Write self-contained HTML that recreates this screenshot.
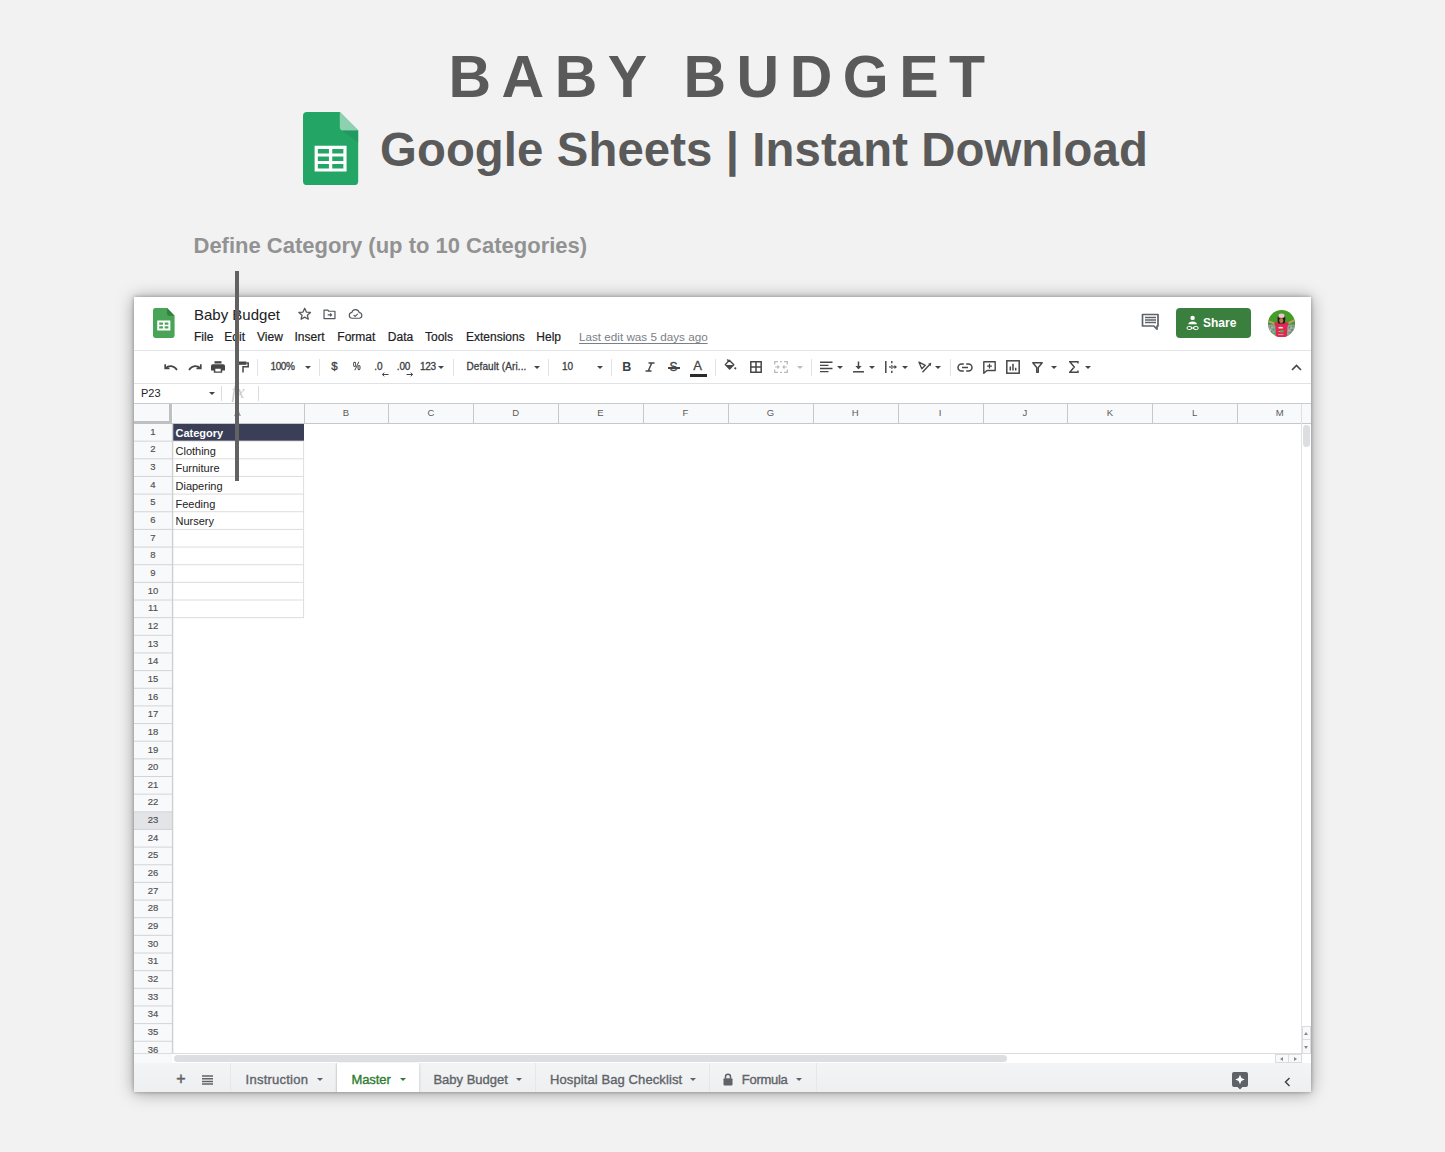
<!DOCTYPE html>
<html><head><meta charset="utf-8"><title>Baby Budget</title>
<style>
*{box-sizing:border-box}
html,body{margin:0;padding:0}
body{width:1445px;height:1152px;background:#f2f2f2;position:relative;overflow:hidden;font-family:"Liberation Sans",Arial,sans-serif;color:#222}
.abs{position:absolute}
.t{position:absolute;white-space:nowrap;line-height:1}
#title{left:448.5px;top:47.5px;font-weight:bold;font-size:59px;letter-spacing:10.5px;color:#5a5a5a}
#sub{left:380px;top:126px;font-weight:bold;font-size:47.3px;letter-spacing:.1px;color:#5a5a5a}
#cap{left:193.5px;top:235px;font-weight:bold;font-size:22px;color:#929292}
#win{left:134px;top:297px;width:1177px;height:795px;background:#fff;box-shadow:0 1px 16px rgba(0,0,0,.36),0 0 4px rgba(0,0,0,.3);overflow:hidden}
#vline{left:235.3px;top:271px;width:3.3px;height:210px;background:#626262}
.menu{font-size:12px;color:#202124;top:34px;-webkit-text-stroke:.2px #202124}
.hl{position:absolute;left:0;width:1177px;height:1px}
.tb{font-size:10px;color:#3c4043;top:65px;-webkit-text-stroke:.3px #3c4043}
.sep{position:absolute;top:62px;width:1px;height:17px;background:#e1e3e6}
.arr{position:absolute;width:0;height:0;border-left:3.5px solid transparent;border-right:3.5px solid transparent;border-top:3.5px solid #444;top:69px}
.rh{position:absolute;left:0;width:38px;height:17.65px;font-size:9.5px;color:#505050;text-align:center;line-height:17.65px;-webkit-text-stroke:.15px #505050}
.ch{position:absolute;top:107px;height:20px;font-size:9.5px;color:#5a5a5a;text-align:center;line-height:18px;background:#f8f9fa;border-right:1px solid #c8c8c8}
.cell{position:absolute;left:38.5px;width:131.5px;font-size:11px;color:#222;padding-left:3px;white-space:nowrap}
.tab{position:absolute;top:766px;height:29px;font-size:13px;color:#5f6368;line-height:1}
.tab span{position:absolute;top:9.5px;white-space:nowrap;-webkit-text-stroke:.35px currentColor}
.ta{position:absolute;width:0;height:0;border-left:3.5px solid transparent;border-right:3.5px solid transparent;border-top:3.5px solid #5f6368;top:781px}
</style></head><body>

<div class="t" id="title">BABY BUDGET</div>
<svg class="abs" style="left:303.4px;top:111.5px" width="55.2" height="73.2" viewBox="0 0 57 75" preserveAspectRatio="none">
<path d="M4 0h34l19 19v52a4 4 0 0 1-4 4H4a4 4 0 0 1-4-4V4a4 4 0 0 1 4-4z" fill="#23a566"/>
<path d="M38 0l19 19H42a4 4 0 0 1-4-4z" fill="#8ed1b1"/>
<path d="M40 19h17v12z" fill="#1c8f58" opacity=".45"/>
<path d="M12 34.5h33v26.5H12zM15.3 37.8v4.6h11.5v-4.6zM30.2 37.8v4.6h11.5v-4.6zM15.3 45.5v4.6h11.5v-4.6zM30.2 45.5v4.6h11.5v-4.6zM15.3 53.2v4.6h11.5v-4.6zM30.2 53.2v4.6h11.5v-4.6z" fill="#fff" fill-rule="evenodd"/>
</svg>
<div class="t" id="sub">Google Sheets | Instant Download</div>
<div class="t" id="cap">Define Category (up to 10 Categories)</div>
<div class="abs" id="win">
<svg class="abs" style="left:19.4px;top:11.4px" width="21.6" height="30" viewBox="0 0 23 31" preserveAspectRatio="none">
<path d="M2.5 0H15l8 8v20.5a2.5 2.5 0 0 1-2.5 2.5h-18A2.5 2.5 0 0 1 0 28.500v-26A2.500 2.500 0 0 1 2.5 0z" fill="#4aa457"/>
<path d="M15 0l8 8h-6a2 2 0 0 1-2-2z" fill="#33803f"/>
<path d="M4.5 12.800h14v10.400h-14zM6.600 14.900v2.300h4v-2.300zM12.400 14.900v2.300h4v-2.300zM6.600 18.900v2.300h4v-2.300zM12.400 18.900v2.300h4v-2.300z" fill="#fff" fill-rule="evenodd"/>
</svg>
<div class="t" style="left:60px;top:10px;font-size:15px;color:#202124">Baby Budget</div>
<svg class="abs" style="left:162.8px;top:8.8px" width="15.4" height="15.4" viewBox="0 0 24 24"><path d="M12 3.500l2.600 6 6.400.6-4.900 4.200 1.500 6.300L12 17.300l-5.600 3.300 1.500-6.300L3 10.100l6.400-.6z" fill="none" stroke="#54585c" stroke-width="2" stroke-linejoin="round"/></svg>
<svg class="abs" style="left:187.8px;top:9.7px" width="15" height="14.6" viewBox="0 0 24 24"><path d="M3 5h6l2 2h10v12H3z" fill="none" stroke="#54585c" stroke-width="2" stroke-linejoin="round"/><path d="M9 13h6M13 10.500l2.500 2.500-2.500 2.500" fill="none" stroke="#54585c" stroke-width="1.800"/></svg>
<svg class="abs" style="left:213.7px;top:10.4px" width="15.4" height="14.2" viewBox="0 0 26 24"><path d="M7 19a5 5 0 0 1-.5-9.950A6.500 6.500 0 0 1 19 9.500a4.800 4.800 0 0 1 .5 9.500z" fill="none" stroke="#54585c" stroke-width="2"/><path d="M9.500 13.500l2.500 2.500 4.500-4.500" fill="none" stroke="#54585c" stroke-width="1.800"/></svg>
<div class="t menu" style="left:60px">File</div>
<div class="t menu" style="left:90.30000000000001px">Edit</div>
<div class="t menu" style="left:123px">View</div>
<div class="t menu" style="left:160.5px">Insert</div>
<div class="t menu" style="left:203.3px">Format</div>
<div class="t menu" style="left:253.8px">Data</div>
<div class="t menu" style="left:291px">Tools</div>
<div class="t menu" style="left:332px">Extensions</div>
<div class="t menu" style="left:402.29999999999995px">Help</div>
<div class="t menu" style="left:445px;color:#7b8086;-webkit-text-stroke:0;text-decoration:underline;text-decoration-thickness:1px;text-underline-offset:1.5px;font-size:11.7px">Last edit was 5 days ago</div>
<svg class="abs" style="left:1007px;top:16px" width="19" height="18" viewBox="0 0 19 18"><path d="M1.500 1.500h15.500v11.500h-1v3.200l-3.200-3.200H1.500z" fill="none" stroke="#5f6368" stroke-width="1.700" stroke-linejoin="round"/><path d="M4 4.500h11M4 7h11M4 9.500h11" stroke="#5f6368" stroke-width="1.300"/></svg>
<div class="abs" style="left:1042px;top:11px;width:75px;height:30px;border-radius:4px;background:#3b7f3f"></div>
<svg class="abs" style="left:1051px;top:18px" width="15" height="16" viewBox="0 0 15 16"><circle cx="7.6" cy="2.9" r="2.2" fill="#fff"/><path d="M3.2 9.300c0-1.900 2-2.900 4.400-2.900s4.400 1 4.400 2.900z" fill="#fff"/><rect x="2" y="11.500" width="4.800" height="3" rx="1.500" fill="none" stroke="#fff" stroke-width="1"/><rect x="8.400" y="11.500" width="4.800" height="3" rx="1.500" fill="none" stroke="#fff" stroke-width="1"/><path d="M5.500 13h4.200" stroke="#fff" stroke-width="1"/></svg>
<div class="t" style="left:1069px;top:20px;font-size:12px;font-weight:bold;color:#fff">Share</div>
<svg class="abs" style="left:1133.9px;top:12.6px" width="27.2" height="27.4" viewBox="0 0 27.2 27.4"><defs><clipPath id="av"><circle cx="13.6" cy="13.7" r="13.6"/></clipPath><filter id="bl" x="-10%" y="-10%" width="120%" height="120%"><feGaussianBlur stdDeviation="0.45"/></filter></defs><g clip-path="url(#av)"><rect width="28" height="28" fill="#449d27"/><g filter="url(#bl)"><path d="M0 15.200C3 13.800 5.500 14.500 7.500 15.500V28H0zM19 15.500c2.500-1.200 5.500-1.500 8.500-.3V28H19z" fill="#a79fbb" opacity=".8"/><g fill="#4f9c33"><circle cx="2.500" cy="17" r=".8"/><circle cx="5.500" cy="19.500" r=".9"/><circle cx="3.500" cy="22" r=".8"/><circle cx="6.500" cy="23.500" r=".7"/><circle cx="21.500" cy="17.500" r=".8"/><circle cx="24" cy="20" r=".9"/><circle cx="22" cy="22.500" r=".8"/><circle cx="25" cy="16.500" r=".7"/></g><g fill="#c9c2d8"><circle cx="4" cy="17.500" r=".7"/><circle cx="2.500" cy="20" r=".7"/><circle cx="23" cy="18" r=".7"/><circle cx="21" cy="20.500" r=".7"/><circle cx="24.500" cy="22" r=".6"/></g><path d="M0.200 10.600C3 11 5.200 12 7.200 13.300L6.300 15C4.500 13.500 2.500 12.600 0 12.200zM26.800 9.300c-2.600.8-4.800 2-6.800 3.500l.9 1.700c1.800-1.600 3.800-2.800 6.300-3.600z" fill="#c89a72"/><path d="M6.200 13.200c1.500-.9 3.200-1.200 4.600-1.200h5.600c1.500 0 3 .3 4.300 1.200l-1.300 3.600-.7 10.700H8.200L7.700 16.800z" fill="#e2264e"/><path d="M9.600 8.200c0-2.200 1.700-3.600 3.800-3.600s3.900 1.400 3.900 3.600c0 1.800-.3 4.300-.9 5.300h-6c-.6-1-.8-3.500-.8-5.300z" fill="#1f1712"/><ellipse cx="13.300" cy="10.600" rx="2.100" ry="2.600" fill="#b5794f"/><path d="M9.300 8.300c1.400-.7 6.600-.7 8.300 0l-.3-1c-1.500-.8-6.200-.8-7.700 0z" fill="#4a3a3a"/><ellipse cx="13.500" cy="5.800" rx="3.100" ry="2.200" fill="#ecc3cf"/><ellipse cx="12.700" cy="17.700" rx="2.500" ry="0.900" fill="#cfeef0"/><rect x="12.400" y="20" width="3.300" height="2.600" fill="#5aa34a"/><path d="M10.500 21.500h2M10 24.600h5.500" stroke="#c9b7d6" stroke-width="0.800"/></g></g></svg>
<div class="hl" style="top:53px;background:#e3e5e8"></div>
<div class="hl" style="top:86px;background:#dfe3e8"></div>
<div class="hl" style="top:106px;background:#c9ccd0"></div>
<svg class="abs" style="left:30.0px;top:65.0px" width="14" height="10" viewBox="0 0 14 10"><path d="M1.200 2.200v4.300h4.300M1.600 6.300C4.500 3.200 9.800 3 13 8" fill="none" stroke="#444746" stroke-width="1.700"/></svg>
<svg class="abs" style="left:53.5px;top:65.0px" width="14" height="10" viewBox="0 0 14 10"><path d="M12.800 2.200v4.300H8.500M12.400 6.300C9.500 3.200 4.200 3 1 8" fill="none" stroke="#444746" stroke-width="1.700"/></svg>
<svg class="abs" style="left:77.0px;top:64.0px" width="14" height="12" viewBox="0 0 14 12"><rect x="3.500" y="0.200" width="7" height="2.300" fill="#444746"/><path d="M1.800 3.300h10.400a1.800 1.800 0 0 1 1.800 1.800v4.400h-2.800v2.300H2.800V9.500H0V5.100a1.800 1.800 0 0 1 1.800-1.800zM4.300 7.800v2.600h5.400V7.800z" fill="#444746" fill-rule="evenodd"/></svg>
<svg class="abs" style="left:103.5px;top:64.0px" width="11" height="12" viewBox="0 0 11 12"><path d="M0.500 0.500h8v3.300h-8z" fill="#444746"/><path d="M8.500 2h1.700v3.700H5v5.800" fill="none" stroke="#444746" stroke-width="1.500"/></svg>
<div class="sep" style="left:123px"></div>
<div class="t tb" style="left:136.5px;letter-spacing:-.4px">100%</div>
<div class="arr" style="left:171.1px;top:68.5px"></div>
<div class="sep" style="left:185px"></div>
<div class="t tb" style="left:197.2px;font-size:11.500px;top:63.500px">$</div>
<div class="t tb" style="left:219.3px;font-size:10.5px;top:64px;transform:scaleX(.82);transform-origin:0 0">%</div>
<div class="t tb" style="left:240.3px;">.0</div>
<div class="t tb" style="left:262.8px;letter-spacing:-.2px">.00</div>
<svg class="abs" style="left:247.0px;top:74.5px" width="8" height="5" viewBox="0 0 8 5"><path d="M7.500 2.500H1.500M3.300 0.700L1.300 2.500l2 1.800" fill="none" stroke="#444746" stroke-width="1"/></svg>
<svg class="abs" style="left:271.5px;top:74.5px" width="8" height="5" viewBox="0 0 8 5"><path d="M0.500 2.500H6.500M4.700 0.700l2 1.800-2 1.800" fill="none" stroke="#444746" stroke-width="1"/></svg>
<div class="t tb" style="left:286.0px;letter-spacing:-.3px">123</div>
<div class="arr" style="left:304.2px;top:68.5px"></div>
<div class="sep" style="left:319px"></div>
<div class="t tb" style="left:332.5px;letter-spacing:.11px">Default (Ari...</div>
<div class="arr" style="left:399.8px;top:68.5px"></div>
<div class="sep" style="left:414px"></div>
<div class="t tb" style="left:428.0px;">10</div>
<div class="arr" style="left:463.2px;top:68.5px"></div>
<div class="sep" style="left:477px"></div>
<div class="t tb" style="left:488.3px;font-weight:bold;font-size:12.5px;top:63.5px;-webkit-text-stroke:0">B</div>
<svg class="abs" style="left:511.0px;top:65.0px" width="10" height="10" viewBox="0 0 10 10"><path d="M3.500 1h6M0.500 9h6M6.700 1L3.300 9" fill="none" stroke="#444746" stroke-width="1.500"/></svg>
<div class="t tb" style="left:535.5px;top:63.500px;font-size:12px;color:#444746">S</div>
<div class="abs" style="left:533.5px;top:70.3px;width:12px;height:1.300px;background:#444746"></div>
<div class="t tb" style="left:559.2px;top:62px;font-size:13px;color:#444746">A</div>
<div class="abs" style="left:555.5px;top:77px;width:17.500px;height:2.500px;background:#2b2b2b"></div>
<div class="sep" style="left:580.5px"></div>
<svg class="abs" style="left:590.0px;top:62.0px" width="13" height="12" viewBox="0 0 13 12"><path d="M5.300 1.200L9.800 5.700 5.600 9.900 1.300 5.600z" fill="none" stroke="#444746" stroke-width="1.400" stroke-linejoin="round"/><path d="M2 6h7.300L5.600 9.500z" fill="#444746"/><path d="M3.200 0.500L5.500 2.800" stroke="#444746" stroke-width="1.300"/><circle cx="11.300" cy="9.300" r="1.100" fill="#444746"/></svg>
<svg class="abs" style="left:616.0px;top:64.3px" width="12" height="12" viewBox="0 0 12 12"><path d="M0.800 0.800h10.400v10.400H0.800zM6 0.800v10.400M0.800 6h10.400" fill="none" stroke="#444746" stroke-width="1.500"/></svg>
<svg class="abs" style="left:640.0px;top:64.0px" width="14" height="12" viewBox="0 0 14 12"><path d="M0.700 3.500V0.700H4M6 0.700h2M10 0.700h3.300v2.800M0.700 8.500v2.800H4M6 11.300h2M10 11.300h3.300V8.500" fill="none" stroke="#b9bcbb" stroke-width="1.300"/><path d="M1 6h4M3.500 4.500L5 6 3.500 7.500M13 6H9M10.500 4.500L9 6l1.500 1.500" fill="none" stroke="#b9bcbb" stroke-width="1.100"/></svg>
<div class="arr" style="left:662.5px;top:68.5px;border-top-color:#b9bcbb"></div>
<div class="sep" style="left:677px"></div>
<svg class="abs" style="left:685.5px;top:64.0px" width="13" height="12" viewBox="0 0 13 12"><path d="M0 1.300h12.500M0 4.400h8.500M0 7.500h12.500M0 10.600h8.500" stroke="#444746" stroke-width="1.400"/></svg>
<div class="arr" style="left:702.5px;top:68.5px"></div>
<svg class="abs" style="left:719.0px;top:64.0px" width="11" height="12" viewBox="0 0 11 12"><path d="M0 10.800h11" stroke="#444746" stroke-width="1.500"/><path d="M5.500 0.500v7" stroke="#444746" stroke-width="1.500"/><path d="M2.300 5l3.200 3.300L8.700 5z" fill="#444746"/></svg>
<div class="arr" style="left:735.3px;top:68.5px"></div>
<svg class="abs" style="left:750.5px;top:64.0px" width="13" height="12" viewBox="0 0 13 12"><path d="M0.800 0v12" stroke="#444746" stroke-width="1.500"/><path d="M6.800 0v2.300M6.800 4.300v1M6.800 9.700v2.300M6.800 7v.700" stroke="#444746" stroke-width="1.400"/><path d="M4 6h7" stroke="#444746" stroke-width="1.200"/><path d="M9.500 4l2.500 2-2.500 2z" fill="#444746"/></svg>
<div class="arr" style="left:767.9px;top:68.5px"></div>
<svg class="abs" style="left:784.0px;top:64.0px" width="14" height="12" viewBox="0 0 14 12"><path d="M1 1.200l6.300 3.100-3.500 3.400z" fill="none" stroke="#444746" stroke-width="1.300" stroke-linejoin="round"/><path d="M4.500 11.300L12 3.200" stroke="#444746" stroke-width="1.400"/><path d="M13.300 1.800l-.6 3.400-2.600-2.400z" fill="#444746"/></svg>
<div class="arr" style="left:800.9px;top:68.5px"></div>
<div class="sep" style="left:816px"></div>
<svg class="abs" style="left:823.0px;top:65.5px" width="16" height="9" viewBox="0 0 16 9"><path d="M6.800 1H4.500a3.500 3.500 0 0 0 0 7h2.300M9.200 1h2.300a3.500 3.500 0 0 1 0 7H9.200M5 4.500h6" fill="none" stroke="#444746" stroke-width="1.500"/></svg>
<svg class="abs" style="left:848.5px;top:63.5px" width="13" height="13" viewBox="0 0 13 13"><path d="M0.800 0.800h11.400v8.700H4L0.800 12.300z" fill="none" stroke="#444746" stroke-width="1.400" stroke-linejoin="round"/><path d="M6.500 2.800v4.700M4.100 5.200h4.800" stroke="#444746" stroke-width="1.300"/></svg>
<svg class="abs" style="left:871.5px;top:63.3px" width="14" height="14" viewBox="0 0 14 14"><rect x="0.800" y="0.800" width="12.400" height="12.400" fill="none" stroke="#444746" stroke-width="1.500"/><path d="M4.300 10.500V6.500M7 10.500V3.800M9.700 10.500V7.800" stroke="#444746" stroke-width="1.500"/></svg>
<svg class="abs" style="left:897.5px;top:64.5px" width="11" height="11" viewBox="0 0 11 11"><path d="M0.800 0.800h9.400L6.300 5.500v4.700H4.700V5.500z" fill="none" stroke="#444746" stroke-width="1.400" stroke-linejoin="round"/></svg>
<div class="arr" style="left:917.3px;top:68.5px"></div>
<svg class="abs" style="left:934.5px;top:64.0px" width="10" height="12" viewBox="0 0 10 12"><path d="M9 2.500V0.800H0.800L5.300 6 0.800 11.200H9V9.500" fill="none" stroke="#444746" stroke-width="1.400" stroke-linejoin="miter"/></svg>
<div class="arr" style="left:950.5px;top:68.5px"></div>
<svg class="abs" style="left:1156.5px;top:66.5px" width="11" height="7" viewBox="0 0 11 7"><path d="M1 6l4.500-4.500L10 6" fill="none" stroke="#444746" stroke-width="1.600"/></svg>
<div class="t" style="left:7px;top:91px;font-size:11px;color:#222">P23</div>
<div class="arr" style="left:74.5px;top:94.5px"></div>
<div class="abs" style="left:87px;top:89px;width:1px;height:15px;background:#dadce0"></div>
<div class="t" style="left:97.5px;top:85.5px;font-size:18px;font-style:italic;font-family:'Liberation Serif',serif;color:#cacaca">fx</div>
<div class="abs" style="left:124px;top:89px;width:1px;height:15px;background:#dadce0"></div>
<div class="abs" style="left:0;top:107px;width:38.3px;height:20px;background:#f8f9fa;border-right:3px solid #bfc0c2;border-bottom:3.5px solid #bfc0c2"></div>
<div class="ch" style="left:38.5px;width:132.0px;overflow:hidden"><div style="position:relative;left:-1px;width:132.0px">A</div></div>
<div class="ch" style="left:170.5px;width:84.9px;overflow:hidden"><div style="position:relative;left:-1px;width:84.9px">B</div></div>
<div class="ch" style="left:255.4px;width:84.9px;overflow:hidden"><div style="position:relative;left:-1px;width:84.9px">C</div></div>
<div class="ch" style="left:340.3px;width:84.9px;overflow:hidden"><div style="position:relative;left:-1px;width:84.9px">D</div></div>
<div class="ch" style="left:425.1px;width:84.9px;overflow:hidden"><div style="position:relative;left:-1px;width:84.9px">E</div></div>
<div class="ch" style="left:510.0px;width:84.9px;overflow:hidden"><div style="position:relative;left:-1px;width:84.9px">F</div></div>
<div class="ch" style="left:594.9px;width:84.9px;overflow:hidden"><div style="position:relative;left:-1px;width:84.9px">G</div></div>
<div class="ch" style="left:679.8px;width:84.9px;overflow:hidden"><div style="position:relative;left:-1px;width:84.9px">H</div></div>
<div class="ch" style="left:764.7px;width:84.9px;overflow:hidden"><div style="position:relative;left:-1px;width:84.9px">I</div></div>
<div class="ch" style="left:849.5px;width:84.9px;overflow:hidden"><div style="position:relative;left:-1px;width:84.9px">J</div></div>
<div class="ch" style="left:934.4px;width:84.9px;overflow:hidden"><div style="position:relative;left:-1px;width:84.9px">K</div></div>
<div class="ch" style="left:1019.3px;width:84.9px;overflow:hidden"><div style="position:relative;left:-1px;width:84.9px">L</div></div>
<div class="ch" style="left:1104.2px;width:63.8px;overflow:hidden;border-right-color:#e0e0e0"><div style="position:relative;left:-1px;width:84.9px">M</div></div>
<div class="abs" style="left:38px;top:126px;width:1139px;height:1px;background:#c6c7c9"></div>
<div class="abs" style="left:1168px;top:107px;width:9px;height:19px;background:#f8f9fa"></div>
<div class="abs" style="left:0;top:127.0px;width:38.3px;height:630.0px;background:#f8f9fa"></div>
<div class="abs" style="left:0;top:515.30px;width:38.3px;height:17.65px;background:#e2e4e7"></div>
<div class="rh" style="top:125.80px">1</div>
<div class="rh" style="top:143.45px">2</div>
<div class="rh" style="top:161.10px">3</div>
<div class="rh" style="top:178.75px">4</div>
<div class="rh" style="top:196.40px">5</div>
<div class="rh" style="top:214.05px">6</div>
<div class="rh" style="top:231.70px">7</div>
<div class="rh" style="top:249.35px">8</div>
<div class="rh" style="top:267.00px">9</div>
<div class="rh" style="top:284.65px">10</div>
<div class="rh" style="top:302.30px">11</div>
<div class="rh" style="top:319.95px">12</div>
<div class="rh" style="top:337.60px">13</div>
<div class="rh" style="top:355.25px">14</div>
<div class="rh" style="top:372.90px">15</div>
<div class="rh" style="top:390.55px">16</div>
<div class="rh" style="top:408.20px">17</div>
<div class="rh" style="top:425.85px">18</div>
<div class="rh" style="top:443.50px">19</div>
<div class="rh" style="top:461.15px">20</div>
<div class="rh" style="top:478.80px">21</div>
<div class="rh" style="top:496.45px">22</div>
<div class="rh" style="top:514.10px">23</div>
<div class="rh" style="top:531.75px">24</div>
<div class="rh" style="top:549.40px">25</div>
<div class="rh" style="top:567.05px">26</div>
<div class="rh" style="top:584.70px">27</div>
<div class="rh" style="top:602.35px">28</div>
<div class="rh" style="top:620.00px">29</div>
<div class="rh" style="top:637.65px">30</div>
<div class="rh" style="top:655.30px">31</div>
<div class="rh" style="top:672.95px">32</div>
<div class="rh" style="top:690.60px">33</div>
<div class="rh" style="top:708.25px">34</div>
<div class="rh" style="top:725.90px">35</div>
<div class="rh" style="top:743.55px">36</div>
<div class="abs" style="left:38.6px;top:127px;width:131.4px;height:17.45px;background:#3a3e57"></div>
<div class="cell" style="top:127.00px;height:17.65px;line-height:19.05px;color:#fff;font-weight:bold">Category</div>
<div class="cell" style="top:144.65px;height:17.65px;line-height:19.05px">Clothing</div>
<div class="cell" style="top:162.30px;height:17.65px;line-height:19.05px">Furniture</div>
<div class="cell" style="top:179.95px;height:17.65px;line-height:19.05px">Diapering</div>
<div class="cell" style="top:197.60px;height:17.65px;line-height:19.05px">Feeding</div>
<div class="cell" style="top:215.25px;height:17.65px;line-height:19.05px">Nursery</div>
<svg class="abs" style="left:0;top:0" width="1177" height="760" viewBox="0 0 1177 760"><path d="M0 144.15H38.3M0 161.80H38.3M0 179.45H38.3M0 197.10H38.3M0 214.75H38.3M0 232.40H38.3M0 250.05H38.3M0 267.70H38.3M0 285.35H38.3M0 303.00H38.3M0 320.65H38.3M0 338.30H38.3M0 355.95H38.3M0 373.60H38.3M0 391.25H38.3M0 408.90H38.3M0 426.55H38.3M0 444.20H38.3M0 461.85H38.3M0 479.50H38.3M0 497.15H38.3M0 514.80H38.3M0 532.45H38.3M0 550.10H38.3M0 567.75H38.3M0 585.40H38.3M0 603.05H38.3M0 620.70H38.3M0 638.35H38.3M0 656.00H38.3M0 673.65H38.3M0 691.30H38.3M0 708.95H38.3M0 726.60H38.3M0 744.25H38.3" stroke="#d3d4d6" stroke-width="1" fill="none"/><path d="M38.8 144.15H170M38.8 161.80H170M38.8 179.45H170M38.8 197.10H170M38.8 214.75H170M38.8 232.40H170M38.8 250.05H170M38.8 267.70H170M38.8 285.35H170M38.8 303.00H170M38.8 320.65H170M169.6 144.65V321.15" stroke="#dddddd" stroke-width="1" fill="none"/><path d="M38.6 126.50V757" stroke="#cfd0d2" stroke-width="1.4" fill="none"/></svg>
<div class="abs" style="left:1167px;top:126px;width:1px;height:631px;background:#e3e3e3"></div>
<div class="abs" style="left:1169px;top:128px;width:7px;height:22px;border-radius:4px;background:#dcdee1"></div>
<div class="abs" style="left:1168px;top:729px;width:9px;height:14px;border:1px solid #dcdcdc;background:#f8f9fa"></div>
<div class="abs" style="left:1168px;top:742px;width:9px;height:15px;border:1px solid #dcdcdc;background:#f8f9fa"></div>
<div class="abs" style="left:1170px;top:734.500px;border-left:2.500px solid transparent;border-right:2.500px solid transparent;border-bottom:3px solid #888;width:0;height:0"></div>
<div class="abs" style="left:1170px;top:748.500px;border-left:2.500px solid transparent;border-right:2.500px solid transparent;border-top:3px solid #888;width:0;height:0"></div>
<div class="abs" style="left:0;top:756px;width:1177px;height:1px;background:#dcdcdc"></div>
<div class="abs" style="left:0;top:757px;width:1177px;height:9px;background:#fff"></div>
<div class="abs" style="left:0;top:757px;width:38px;height:9px;background:#f8f9fa"></div>
<div class="abs" style="left:40px;top:758px;width:833px;height:7px;border-radius:4px;background:#dcdee1"></div>
<div class="abs" style="left:1141px;top:757px;width:14px;height:9px;border:1px solid #dcdcdc;background:#f8f9fa"></div>
<div class="abs" style="left:1154px;top:757px;width:14px;height:9px;border:1px solid #dcdcdc;background:#f8f9fa"></div>
<div class="abs" style="left:1146px;top:759.500px;border-top:2.500px solid transparent;border-bottom:2.500px solid transparent;border-right:3px solid #888;width:0;height:0"></div>
<div class="abs" style="left:1160px;top:759.500px;border-top:2.500px solid transparent;border-bottom:2.500px solid transparent;border-left:3px solid #888;width:0;height:0"></div>
<div class="abs" style="left:0;top:766px;width:1177px;height:29px;background:linear-gradient(#f3f4f5,#eeeff1)"></div>
<div class="t" style="left:42.3px;top:774.3px;font-size:16px;color:#5f6368;-webkit-text-stroke:.5px #5f6368">+</div>
<svg class="abs" style="left:68.0px;top:778.0px" width="11" height="10" viewBox="0 0 11 10"><path d="M0 1h11M0 3.700h11M0 6.400h11M0 9.100h11" stroke="#5f6368" stroke-width="1.500"/></svg>
<div class="tab" style="left:96.6px;width:106.1px;border-right:1px solid #e6e7e9"><span style="left:15.0px;color:#5f6368;letter-spacing:0.23px">Instruction</span></div>
<div class="ta" style="left:182.8px;border-top-color:#5f6368"></div>
<div class="tab" style="left:202.7px;width:82.6px;background:#fff;box-shadow:0 1px 3px rgba(0,0,0,.2)"><span style="left:14.8px;color:#2e7d32;letter-spacing:-0.1px">Master</span></div>
<div class="ta" style="left:265.6px;border-top-color:#2e7d32"></div>
<div class="tab" style="left:285.3px;width:117.2px;border-right:1px solid #e6e7e9"><span style="left:14.1px;color:#5f6368;letter-spacing:0px">Baby Budget</span></div>
<div class="ta" style="left:381.5px;border-top-color:#5f6368"></div>
<div class="tab" style="left:402.5px;width:173.9px;border-right:1px solid #e6e7e9"><span style="left:13.5px;color:#5f6368;letter-spacing:0.1px">Hospital Bag Checklist</span></div>
<div class="ta" style="left:555.5px;border-top-color:#5f6368"></div>
<div class="tab" style="left:576.4px;width:106.2px;border-right:1px solid #e6e7e9"><span style="left:31.4px;color:#5f6368;letter-spacing:-0.28px">Formula</span></div>
<div class="ta" style="left:662.1px;border-top-color:#5f6368"></div>
<div class="abs" style="left:96px;top:766px;width:1px;height:29px;background:#e6e7e9"></div>
<svg class="abs" style="left:589.0px;top:776.0px" width="10" height="13" viewBox="0 0 10 13"><path d="M2.500 5.500V3.800a2.500 2.500 0 0 1 5 0v1.700" fill="none" stroke="#5f6368" stroke-width="1.500"/><rect x="0.500" y="5.300" width="9" height="7.200" rx="1" fill="#5f6368"/></svg>
<svg class="abs" style="left:1098.0px;top:774.5px" width="16" height="18" viewBox="0 0 16 18"><path d="M2 0h12a2 2 0 0 1 2 2v11a2 2 0 0 1-2 2h-3.500L8 17.500 5.500 15H2a2 2 0 0 1-2-2V2a2 2 0 0 1 2-2z" fill="#5f6368"/><path d="M8 2.800l1.400 3.300 3.300 1.400-3.300 1.400L8 12.200 6.600 8.900 3.300 7.500l3.300-1.400z" fill="#fff"/></svg>
<svg class="abs" style="left:1150.0px;top:780.0px" width="7" height="10" viewBox="0 0 7 10"><path d="M5.500 1L1.500 5l4 4" fill="none" stroke="#444" stroke-width="1.500"/></svg>
</div>
<div class="abs" id="vline"></div>
</body></html>
